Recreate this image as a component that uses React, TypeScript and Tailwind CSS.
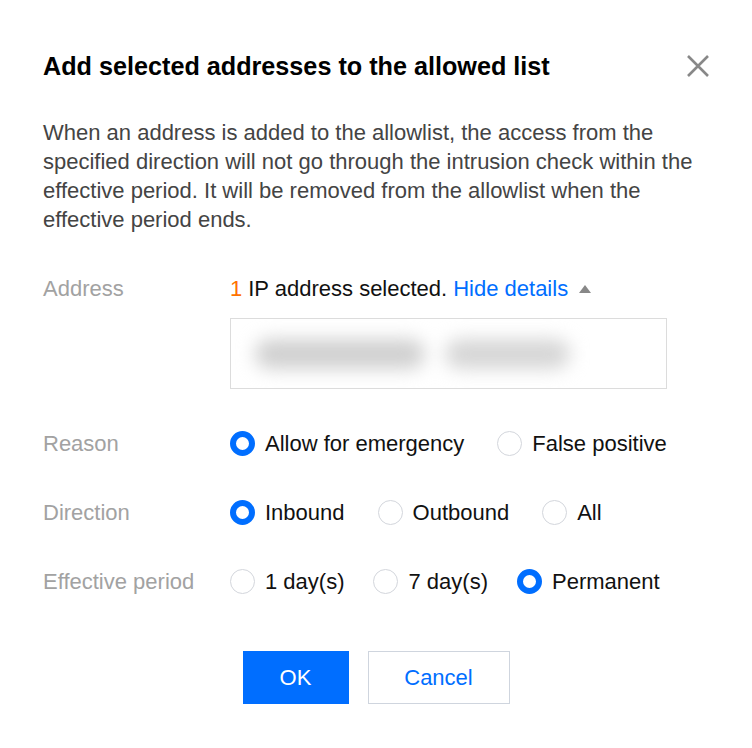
import React from "react";

type Option = { label: string; checked?: boolean };

function Radio({ label, checked }: Option) {
  return (
    <label className="flex items-center gap-[10px]">
      <span
        className={
          checked
            ? "h-[25px] w-[25px] rounded-full border-[6px] border-[#006eff] bg-white"
            : "h-[25px] w-[25px] rounded-full border border-[#d3d6dc] bg-white"
        }
      />
      <span className="text-[#111]">{label}</span>
    </label>
  );
}

function Row({
  label,
  options,
  tight,
}: {
  label: string;
  options: Option[];
  tight?: boolean;
}) {
  return (
    <div className="flex h-[29px] items-center">
      <div className="w-[187px] shrink-0 text-[#a2a2a2]">{label}</div>
      <div className={tight ? "flex items-center gap-[29px]" : "flex items-center gap-[33px]"}>
        {options.map((o) => (
          <Radio key={o.label} {...o} />
        ))}
      </div>
    </div>
  );
}

export default function App() {
  return (
    <div
      className="min-h-[748px] w-full bg-white px-[43px] pt-[51px] text-[22px] leading-[29px]"
      style={{ fontFamily: '"Liberation Sans", Arial, sans-serif' }}
    >
      {/* Header */}
      <div className="flex items-center justify-between">
        <h1 className="text-[25.2px] font-bold leading-[30px] text-black">
          Add selected addresses to the allowed list
        </h1>
        <button className="mr-[-1px] text-[#888]">
          <svg width="24" height="24" viewBox="0 0 24 24" fill="none">
            <path d="M2 2L22 22M22 2L2 22" stroke="currentColor" strokeWidth="2.6" />
          </svg>
        </button>
      </div>

      <p className="mt-[37px] text-[#444]">
        When an address is added to the allowlist, the access from the
        specified direction will not go through the intrusion check within the
        effective period. It will be removed from the allowlist when the
        effective period ends.
      </p>

      {/* Address */}
      <div className="mt-[40px] flex">
        <div className="w-[187px] shrink-0 text-[#a2a2a2]">Address</div>
        <div className="flex flex-col">
          <div className="flex items-center text-[#111]">
            <span className="text-[#ff7200]">1</span>
            <span className="ml-[6px]">IP address selected.</span>
            <span className="ml-[6px] text-[#006eff]">Hide details</span>
            <svg className="ml-[11px]" width="12" height="8" viewBox="0 0 12 8">
              <path d="M6 0L12 8H0Z" fill="#888" />
            </svg>
          </div>
          <div className="mt-[15px] flex h-[71px] w-[437px] items-center overflow-hidden border border-[#dcdcdc] px-[24px]">
            <div className="flex gap-[20px] blur-[9px]">
              <div className="h-[30px] w-[170px] rounded-full bg-[#d0d0d0]" />
              <div className="h-[30px] w-[125px] rounded-full bg-[#d6d6d6]" />
            </div>
          </div>
        </div>
      </div>

      {/* Radios */}
      <div className="mt-[40px] flex flex-col gap-[40px]">
        <Row
          label="Reason"
          options={[
            { label: "Allow for emergency", checked: true },
            { label: "False positive" },
          ]}
        />
        <Row
          label="Direction"
          options={[
            { label: "Inbound", checked: true },
            { label: "Outbound" },
            { label: "All" },
          ]}
        />
        <Row
          label="Effective period"
          tight
          options={[
            { label: "1 day(s)" },
            { label: "7 day(s)" },
            { label: "Permanent", checked: true },
          ]}
        />
      </div>

      {/* Footer */}
      <div className="mt-[55px] flex justify-center gap-[19px]">
        <button className="h-[53px] w-[106px] bg-[#006eff] text-white">OK</button>
        <button className="h-[53px] w-[142px] border border-[#cfd5de] bg-white text-[#006eff]">
          Cancel
        </button>
      </div>
    </div>
  );
}
